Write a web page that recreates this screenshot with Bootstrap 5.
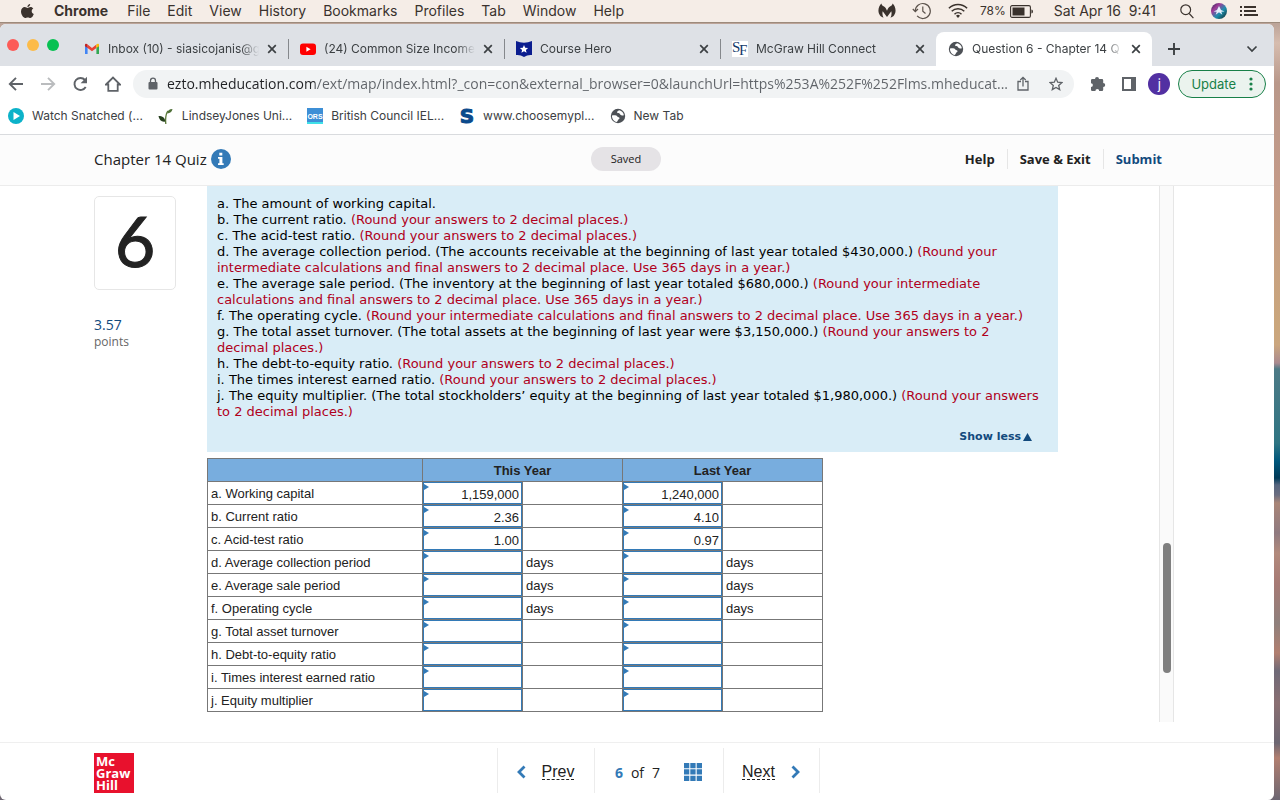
<!DOCTYPE html>
<html lang="en">
<head>
<meta charset="utf-8">
<meta name="viewport" content="width=device-width, initial-scale=1">
<title>Question 6 - Chapter 14 Quiz</title>
<link href="https://cdn.jsdelivr.net/npm/bootstrap@5.3.0/dist/css/bootstrap.min.css" rel="stylesheet">
<style>
  body { min-height: 100vh; color: #222; font-family: "Open Sans", "Liberation Sans", sans-serif; font-size: 14px; }
  button, a { color: inherit; }
  svg { display: block; flex: none; }
  .plain { border: 0; background: none; padding: 0; }
  /* system menu bar */
  .sysbar { height: 23px; background: #f5ede7; border-bottom: 1px solid #9d8b7c; font: 14px/22px Inter, sans-serif; color: #3a322d; padding: 0 22px 0 20px; }
  .sysbar .menus { gap: 17px; }
  .sysbar .app { padding: 0 2px; }
  .sysbar .menus a, .bm a, .tabx a { text-decoration: none; }
  .sysbar .charge { font-size: 12px; }
  .sysbar .clock { white-space: pre; }
  /* desktop behind the browser window */
  .desk { padding: 1px 6px 0 0; background: linear-gradient(#bba398 0, #d6bcae 20px, #b9988a 60px, #c49a88 160px, #caa67c 300px, #cba67e 322px, #a98a90 340px, #4d7a86 346px, #2f7583 420px, #00577c 438px, #003a58 455px, #56657f 462px, #6a6d80 472px, #a98577 480px, #8f7a80 510px, #b28a7c 530px, #a77a75 560px, #8f807c 600px, #b27f70 630px, #6f6a78 648px, #8a6f72 680px, #6c6672 720px, #b27f70 735px, #6c6672 100%); }
  .win { background: #fff; border-radius: 6px; overflow: hidden; }
  .strip { background: #dee1e6; height: 42px; padding: 8px 16px 0 7px; font: 12px/34px Inter, sans-serif; color: #3c4043; }
  .lights { width: 65px; gap: 8px; height: 26px; }
  .lights span { width: 12px; height: 12px; border-radius: 50%; }
  .tabx { flex: 0 1 216px; min-width: 0; height: 34px; padding: 0 11px 0 12px; gap: 8px; position: relative; }
  .tabx a { flex: 1; min-width: 0; overflow: hidden; white-space: nowrap; -webkit-mask-image: linear-gradient(90deg, #000 88%, transparent); mask-image: linear-gradient(90deg, #000 88%, transparent); }
  .tabx + .tabx:not(.on)::before { content: ""; position: absolute; left: 0; top: 7px; height: 20px; width: 1px; background: #85888c; }
  .tabx.on { background: #fff; border-radius: 8px 8px 0 0; }
  .tools { height: 36px; padding: 4px 8px 4px 7px; }
  .omni { background: #f1f3f4; border-radius: 14px; height: 28px; flex: 1; min-width: 0; margin-left: 12px; padding: 0 7px 0 14px; }
  .omni input { flex: 1; min-width: 0; border: 0; padding: 0; outline: 0; font: 14px/20px "Open Sans", sans-serif; color: transparent; background: linear-gradient(90deg, #202124 148px, #5f6368 148px); -webkit-background-clip: text; background-clip: text; }
  .me { width: 22px; height: 22px; margin-left: 12px; border-radius: 50%; background: #5230a2; color: #fff; font: 13px/22px Inter, sans-serif; }
  .upd { height: 28px; border: 1px solid #188048; border-radius: 14px; background: #ebf3ee; color: #188048; font: 13px/20px Inter, sans-serif; padding: 0 12px; gap: 13px; }
  .bm { height: 33px; padding: 0 8px 5px; gap: 15px; border-bottom: 1px solid #d9dbde; font: 12px/20px Inter, sans-serif; color: #3c4043; }
  .bm a { display: flex; align-items: center; gap: 8px; }
  /* quiz */
  .qhead { height: 51px; background: #fcfcfc; border-bottom: 1px solid #ececec; padding: 0 112px 2px 94px; display: grid; grid-template-columns: 1fr auto 1fr; align-items: center; }
  .qtitle { font-size: 15px; }
  .saved { background: #e5e3e6; border-radius: 12px; width: 70px; font-size: 11px; line-height: 24px; text-align: center; }
  .acts button { border: 0; background: none; font-weight: 700; font-size: 13px; line-height: 20px; padding: 0 12px; }
  .acts button + button { border-left: 1px solid #e6e6e6; }
  .acts button:last-child { padding-right: 0; }
  .blue { color: #124a7d; }
  .qmain { padding-left: 94px; }
  .qside { width: 113px; padding-top: 10px; }
  .qnum { width: 82px; height: 94px; border: 1px solid #e6e6e6; border-radius: 5px; font: 70px/86px Lato, sans-serif; -webkit-text-stroke: 1px #222; text-align: center; }
  .score { padding-top: 26px; line-height: 18px; }
  .points { font-size: 12px; line-height: 16px; color: #666; }
  .qbody { margin-right: 101px; }
  .prompt { background: #d9edf7; padding: 10px 17px 7px 10px; font: 13px/16px "DejaVu Sans", sans-serif; color: #000; }
  .prompt em { font-style: normal; color: #b00020; }
  .less { font: bold 11px/17px "DejaVu Sans", sans-serif; padding: 8px 9px 0 0; }
  .less button { gap: 2px; }
  .grid { width: 616px; margin-top: 6px; border-collapse: collapse; table-layout: fixed; font: 13px/20px "Liberation Sans", Arial, sans-serif; color: #222; }
  .grid th, .grid td { border: 1px solid #777; height: 23px; padding: 2px 3px 0; }
  .grid thead th { background: #78adde; text-align: center; }
  .grid tbody th { font-weight: 400; }
  .grid td.cell { padding: 0; position: relative; }
  .grid td.cell::before { content: ""; position: absolute; left: 1px; top: 2px; border: solid transparent; border-width: 3px 0 3px 5px; border-left-color: #337ab7; }
  .grid input { display: block; width: 100%; height: 22px; border: 1px solid #337ab7; border-radius: 0; padding: 2px 2px 0; text-align: right; color: #222; background: #fff; }
  .c-label { width: 215px; }
  .c-val { width: 100px; }
  .track { width: 15px; margin: 0 100px 20px 0; border: solid #e6e6e6; border-width: 0 1px; background: #fafafa; padding-top: 357px; }
  .thumb { width: 8px; height: 130px; margin-left: 3px; border-radius: 4px; background: #7f7f7f; }
  .qfoot { border-top: 1px solid #efefef; padding: 5px 52px 7px 94px; display: grid; grid-template-columns: 1fr auto 1fr; align-items: center; }
  .mh { width: 40px; height: 40px; margin-top: 5px; background: #e8112d; color: #fff; font: bold 13px/12px "Open Sans", sans-serif; padding: 2px; }
  .pager > * { border-left: 1px solid #ececec; height: 45px; padding-top: 3px; }
  .pager > :last-child { border-right: 1px solid #ececec; }
  .step { font: 16px/20px "Liberation Sans", sans-serif; width: 97px; }
  .step span { border-bottom: 1px dashed #222; line-height: 15px; }
  .count { width: 129px; }
  .count strong { color: #337ab7; }
</style>
</head>
<body class="d-flex flex-column">
<svg width="0" height="0" class="position-absolute" aria-hidden="true">
  <symbol id="x" viewBox="0 0 10 10"><path d="M1.2 1.2l7.600 7.600M8.800 1.200l-7.600 7.600" stroke="#3c4043" stroke-width="1.700"/></symbol>
  <symbol id="globe" viewBox="0 0 16 16"><circle cx="8" cy="8" r="7.200" fill="#4d5156"/><path d="M2 7.500c2.500-.3 4.500-.2 5.300.9.700 1 2.200.4 2.200 1.800 0 1.200-1.600.9-1.900 2.700l-.8 1.100C3.800 13.500 1.800 10.600 2 7.500zM9.300 2.200c-1.500.7-2.900 1.600-2 2.600.8.9 2.300.1 2.700 1.300.3 1.200 1.500 1.600 3.900 1.100-.3-2.500-2.100-4.400-4.600-5z" fill="#fff"/></symbol>
</svg>

<nav class="sysbar d-flex align-items-center justify-content-between" aria-label="System">
  <div class="menus d-flex align-items-center">
    <svg width="15" height="17" viewBox="0 0 15 17"><path d="M10.200 1c.1 1.500-1.300 3-2.800 3C7.200 2.500 8.700 1.100 10.200 1zM7.600 4.900c.6 0 1.500-.9 2.900-.9 1.200 0 2.200.6 2.800 1.500-2.300 1.400-2 4.500.5 5.500-.6 1.700-1.900 4-3.400 4-1 0-1.300-.6-2.600-.6s-1.700.6-2.600.6C3.200 15 1 11.500 1 8.600 1 5.700 2.900 4.100 4.700 4.100c1.300 0 2.200.8 2.900.8z" fill="#3a322d"/></svg>
    <a href="#" class="app fw-bold">Chrome</a><a href="#">File</a><a href="#">Edit</a><a href="#">View</a><a href="#">History</a><a href="#">Bookmarks</a><a href="#">Profiles</a><a href="#">Tab</a><a href="#">Window</a><a href="#">Help</a>
  </div>
  <div class="d-flex align-items-center">
    <svg width="18" height="16" viewBox="0 0 18 16"><path d="M3.500.5c.2 1.800 1.300 2.500 2.500 3C7.500 4.300 8.300 6 9 7.800c.7-1.800 1.500-3.500 3-4.300 1.200-.5 2.300-1.200 2.500-3 2.800 2.300 4.400 8 1.600 11.800-1 1.400-2.300 2.100-3.600 2.400 1-1.800 1.400-4 .8-6.500L9 14 4.700 8.200c-.6 2.500-.2 4.700.8 6.500-1.300-.3-2.600-1-3.600-2.400C-.9 8.500.7 2.800 3.500.5z" fill="#3a322d"/></svg>
    <svg class="ms-3" width="20" height="18" viewBox="0 0 20 18" fill="none" stroke="#5c534c" stroke-width="1.200"><path d="M3.300 9a7.500 7.500 0 1 1 1.800 4.900M.8 7l2.500 2.600L6 7M10.800 4.500V9.200l2.700 2.300"/></svg>
    <svg class="ms-3" width="20" height="16" viewBox="0 0 20 16" fill="none" stroke="#3a322d" stroke-width="1.500"><path d="M.9 5.200a13 13 0 0 1 18.200 0M3.700 8.200a9 9 0 0 1 12.600 0M6.500 11.200a5 5 0 0 1 7 0"/><path d="M8 12.800a2.800 2.800 0 0 1 4 0l-2 2.200z" fill="#3a322d" stroke="none"/></svg>
    <span class="charge ms-2 ps-1">78%</span>
    <svg class="ms-1" width="24" height="13" viewBox="0 0 24 13"><rect x=".6" y=".6" width="19.800" height="11.800" rx="1.500" fill="none" stroke="#3a322d" stroke-width="1.100"/><path d="M2.500 2.500h12v8h-12zM21.400 4.500q1.600 0 1.600 2t-1.600 2z" fill="#3a322d"/></svg>
    <span class="clock ms-3 ps-1">Sat Apr 16  9:41</span>
    <svg class="ms-4" width="14" height="15" viewBox="0 0 14 15" fill="none" stroke="#3a322d" stroke-width="1.200"><circle cx="5.700" cy="5.700" r="4.900"/><path d="M9.200 9.500l4.200 4.700"/></svg>
    <svg class="ms-3" width="18" height="18" viewBox="0 0 18 18"><defs><linearGradient id="sr" x1="0" y1="0" x2="1" y2="1"><stop offset="0" stop-color="#1c2450"/><stop offset=".3" stop-color="#a23a98"/><stop offset=".6" stop-color="#1b8fae"/><stop offset="1" stop-color="#122"/></linearGradient></defs><circle cx="9" cy="9" r="8" fill="url(#sr)"/><path d="M9 4l2 4 3.500 1.500-3.200.3 1 3L9 10.300 5.700 12.800l1-3-3.200-.3L7 8z" fill="#e8eefc"/></svg>
    <svg class="ms-2 ps-1" width="22" height="12" viewBox="0 0 18 12" fill="#3a322d"><path d="M0 1h2v2H0zM4 1h12v2H4zM0 5h2v2H0zM4 5h12v2H4zM0 9h2v2H0zM4 9h14v2H4z"/></svg>
  </div>
</nav>

<div class="desk flex-grow-1 d-flex flex-column">
<div class="win flex-grow-1 d-flex flex-column">
  <div class="strip d-flex">
    <div class="lights d-flex align-items-center"><span style="background:#fc5b57"></span><span style="background:#fcbb49"></span><span style="background:#07c152"></span></div>
    <div class="tabx d-flex align-items-center">
      <svg width="16" height="16" viewBox="0 0 16 16"><path d="M1 3v10h2.600V6.500z" fill="#4285f4"/><path d="M15 3v10h-2.600V6.500z" fill="#34a853"/><path d="M3.600 3.500L8 7l4.400-3.500v3.400L8 10.300 3.600 6.900z" fill="#ea4335"/><path d="M1 4.300C1 2.500 2.600 2.500 3.600 3.500v3.400L1 5.200z" fill="#c5221f"/><path d="M15 4.300c0-1.800-1.600-1.800-2.600-.8v3.400L15 5.200z" fill="#fbbc04"/></svg>
      <a href="#">Inbox (10) - siasicojanis@g</a><button class="plain" aria-label="Close tab"><svg width="10" height="10"><use href="#x"/></svg></button></div>
    <div class="tabx d-flex align-items-center">
      <svg width="16" height="16" viewBox="0 0 16 16"><rect y="2.500" width="16" height="11.500" rx="3" fill="#f00"/><path d="M6.400 5.700v5l4.200-2.500z" fill="#fff"/></svg>
      <a href="#">(24) Common Size Income</a><button class="plain" aria-label="Close tab"><svg width="10" height="10"><use href="#x"/></svg></button></div>
    <div class="tabx d-flex align-items-center">
      <svg width="16" height="16" viewBox="0 0 16 16"><path d="M0 0q8 3.500 16 0v14q-4.500-.5-8 2-3.500-2.500-8-2z" fill="#0b1d8f"/><path d="M8 4l1.200 2.700 2.900.3-2.200 1.900.7 2.900L8 10.300l-2.600 1.500.7-2.900L3.900 7l2.900-.3z" fill="#fff"/></svg>
      <a href="#">Course Hero</a><button class="plain" aria-label="Close tab"><svg width="10" height="10"><use href="#x"/></svg></button></div>
    <div class="tabx d-flex align-items-center">
      <svg width="16" height="16" viewBox="0 0 16 16"><path d="M0 0h16v16H0z" fill="#fff"/><text x="0" y="11" font-family="Liberation Serif, serif" font-size="15" fill="#123a6b">S</text><text x="7" y="14" font-family="Liberation Serif, serif" font-size="15" fill="#123a6b">F</text></svg>
      <a href="#">McGraw Hill Connect</a><button class="plain" aria-label="Close tab"><svg width="10" height="10"><use href="#x"/></svg></button></div>
    <div class="tabx on d-flex align-items-center">
      <svg width="16" height="16"><use href="#globe"/></svg>
      <a href="#">Question 6 - Chapter 14 Q</a><button class="plain" aria-label="Close tab"><svg width="10" height="10"><use href="#x"/></svg></button></div>
    <button class="plain ms-3" aria-label="New tab"><svg width="12" height="12" viewBox="0 0 12 12"><path d="M6 0v12M0 6h12" stroke="#3c4043" stroke-width="1.900"/></svg></button>
    <button class="plain ms-auto" aria-label="Search tabs"><svg width="12" height="8" viewBox="0 0 12 8"><path d="M1.500 1.500L6 6l4.500-4.500" fill="none" stroke="#3c4043" stroke-width="1.700"/></svg></button>
  </div>

  <div class="tools d-flex align-items-center">
    <button class="plain" aria-label="Back"><svg width="18" height="16" viewBox="0 0 18 16" fill="none" stroke="#5f6368" stroke-width="1.900"><path d="M16 8H3M9 1.800L2.800 8 9 14.200"/></svg></button>
    <button class="plain ms-3" aria-label="Forward"><svg width="16" height="16" viewBox="0 0 16 16" fill="none" stroke="#babcbe" stroke-width="1.900"><path d="M0 8h13M7 1.800L13.200 8 7 14.200"/></svg></button>
    <button class="plain ms-3" aria-label="Reload"><svg width="16" height="16" viewBox="0 0 16 16"><path d="M12.700 11A6 6 0 1 1 12 4" fill="none" stroke="#5f6368" stroke-width="1.900"/><path d="M14 .8v6.400H7.600z" fill="#5f6368"/></svg></button>
    <button class="plain ms-3" aria-label="Home"><svg width="16" height="16" viewBox="0 0 16 16" fill="none" stroke="#5f6368" stroke-width="1.800"><path d="M1 8.500L8 1.500l7 7h-2.300v6.300H3.300V8.500z"/></svg></button>
    <div class="omni d-flex align-items-center">
      <svg class="me-2" width="12" height="14" viewBox="0 0 12 14"><rect x="1.500" y="5" width="9" height="7.500" rx="1" fill="#5f6368"/><path d="M3.500 5.500V3.700a2.500 2.500 0 0 1 5 0v1.800" fill="none" stroke="#5f6368" stroke-width="1.300"/></svg>
      <input type="text" aria-label="Address" value="ezto.mheducation.com/ext/map/index.html?_con=con&amp;external_browser=0&amp;launchUrl=https%253A%252F%252Flms.mheducat...">
      <button class="plain ms-2" aria-label="Share"><svg width="12" height="16" viewBox="0 0 12 16" fill="none" stroke="#5f6368" stroke-width="1.300"><path d="M4 5.500H1v8.500h10V5.500H8M6 10.500V1.500M3.300 4L6 1.300 8.700 4"/></svg></button>
      <button class="plain ms-3 px-1" aria-label="Bookmark"><svg width="14" height="14" viewBox="0 0 14 14"><path d="M7 1.300l1.700 3.900 4.200.4-3.200 2.800 1 4.200L7 10.400l-3.700 2.200 1-4.200L1.100 5.600l4.200-.4z" fill="none" stroke="#5f6368" stroke-width="1.300"/></svg></button>
    </div>
    <button class="plain ms-3" aria-label="Extensions"><svg width="16" height="16" viewBox="0 0 16 16"><path d="M1 4.200Q1 3 2.200 3H5a2 2 0 0 1 4 0h3q1.200 0 1.200 1.200V7a2 2 0 0 1 0 4v2.800Q13.200 15 12 15H9.200a1.900 1.900 0 0 0-3.800 0H2.200Q1 15 1 13.800V11a1.900 1.900 0 0 0 0-3.800z" fill="#5f6368"/></svg></button>
    <button class="plain ms-3" aria-label="Side panel"><svg width="14" height="14" viewBox="0 0 14 14"><path d="M1 1h12v12H1z" fill="none" stroke="#5f6368" stroke-width="2"/><path d="M9 1h4v12H9z" fill="#5f6368"/></svg></button>
    <button class="plain me" aria-label="Profile">j</button>
    <button class="upd d-flex align-items-center ms-2">Update <svg width="4" height="14" viewBox="0 0 4 14" fill="#188048"><circle cx="2" cy="2" r="1.600"/><circle cx="2" cy="7" r="1.600"/><circle cx="2" cy="12" r="1.600"/></svg></button>
  </div>

  <nav class="bm d-flex align-items-center" aria-label="Bookmarks">
    <a href="#"><svg width="16" height="16" viewBox="0 0 16 16"><circle cx="8" cy="8" r="8" fill="#0cb2c9"/><path d="M5.500 4v8l6.500-4z" fill="#fff"/></svg>Watch Snatched (...</a>
    <a href="#"><svg width="16" height="16" viewBox="0 0 16 16"><path d="M7.800 16C7.300 11 7.600 6 10 3" fill="none" stroke="#5b7a3a" stroke-width="1.300"/><path d="M9.300 5.500C9.500 2.500 11 1.200 14.500 1c-.6 2.900-2.400 4.300-5.200 4.500z" fill="#4f7038"/><path d="M7.200 13.500C4 14.500 1.200 12 .5 8 4.500 8 7 9.500 7.200 13.500z" fill="#27401f"/></svg>LindseyJones Uni...</a>
    <a href="#"><svg width="16" height="16" viewBox="0 0 16 16"><path d="M0 0h16v16H0z" fill="#3d8fd6"/><path d="M0 14h16v2H0z" fill="#3fe0e8"/><text x="8" y="11" text-anchor="middle" font-family="Liberation Sans, sans-serif" font-size="7" font-weight="bold" fill="#fff">ORS</text></svg>British Council IEL...</a>
    <a href="#"><svg width="16" height="16" viewBox="0 0 16 16"><text x="8" y="15" text-anchor="middle" font-family="DejaVu Sans, sans-serif" font-weight="bold" font-size="20" fill="#0b4a8c" stroke="#0b4a8c">S</text></svg>www.choosemypl...</a>
    <a href="#"><svg width="16" height="16"><use href="#globe"/></svg>New Tab</a>
  </nav>

  <header class="qhead">
    <div class="d-flex align-items-center gap-1"><span class="qtitle">Chapter 14 Quiz</span>
      <button class="plain" aria-label="Quiz information"><svg width="20" height="20" viewBox="0 0 20 20"><circle cx="10" cy="10" r="10" fill="#337ab7"/><path d="M8.300 3.800h3v2.700h-3zM7 8h4.400v6.200h1.300V16H7v-1.800h1.400V9.800H7z" fill="#fff"/></svg></button></div>
    <div class="saved me-1" role="status">Saved</div>
    <div class="acts d-flex justify-content-end"><button>Help</button><button>Save &amp; Exit</button><button class="blue">Submit</button></div>
  </header>

  <main class="qmain flex-grow-1 d-flex">
    <aside class="qside flex-shrink-0">
      <div class="qnum">6</div>
      <div class="score blue">3.57</div>
      <div class="points">points</div>
    </aside>
    <div class="qbody flex-grow-1">
      <section class="prompt">
        <div>a. The amount of working capital.</div>
        <div>b. The current ratio. <em>(Round your answers to 2 decimal places.)</em></div>
        <div>c. The acid-test ratio. <em>(Round your answers to 2 decimal places.)</em></div>
        <div>d. The average collection period. (The accounts receivable at the beginning of last year totaled $430,000.) <em>(Round your intermediate calculations and final answers to 2 decimal place. Use 365 days in a year.)</em></div>
        <div>e. The average sale period. (The inventory at the beginning of last year totaled $680,000.) <em>(Round your intermediate calculations and final answers to 2 decimal place. Use 365 days in a year.)</em></div>
        <div>f. The operating cycle. <em>(Round your intermediate calculations and final answers to 2 decimal place. Use 365 days in a year.)</em></div>
        <div>g. The total asset turnover. (The total assets at the beginning of last year were $3,150,000.) <em>(Round your answers to 2 decimal places.)</em></div>
        <div>h. The debt-to-equity ratio. <em>(Round your answers to 2 decimal places.)</em></div>
        <div>i. The times interest earned ratio. <em>(Round your answers to 2 decimal places.)</em></div>
        <div>j. The equity multiplier. (The total stockholders’ equity at the beginning of last year totaled $1,980,000.) <em>(Round your answers to 2 decimal places.)</em></div>
        <div class="d-flex justify-content-end less"><button class="plain blue fw-bold d-flex align-items-center">Show less<svg width="9" height="8" viewBox="0 0 9 8"><path d="M4.500 0L9 8H0z" fill="#124a7d"/></svg></button></div>
      </section>
      <table class="grid">
        <colgroup><col class="c-label"><col class="c-val"><col class="c-val"><col class="c-val"><col class="c-val"></colgroup>
        <thead><tr><th></th><th colspan="2" scope="col">This Year</th><th colspan="2" scope="col">Last Year</th></tr></thead>
        <tbody>
          <tr><th scope="row">a. Working capital</th><td class="cell"><input aria-label="Working capital, this year" value="1,159,000"></td><td></td><td class="cell"><input aria-label="Working capital, last year" value="1,240,000"></td><td></td></tr>
          <tr><th scope="row">b. Current ratio</th><td class="cell"><input aria-label="Current ratio, this year" value="2.36"></td><td></td><td class="cell"><input aria-label="Current ratio, last year" value="4.10"></td><td></td></tr>
          <tr><th scope="row">c. Acid-test ratio</th><td class="cell"><input aria-label="Acid-test ratio, this year" value="1.00"></td><td></td><td class="cell"><input aria-label="Acid-test ratio, last year" value="0.97"></td><td></td></tr>
          <tr><th scope="row">d. Average collection period</th><td class="cell"><input aria-label="Average collection period, this year"></td><td>days</td><td class="cell"><input aria-label="Average collection period, last year"></td><td>days</td></tr>
          <tr><th scope="row">e. Average sale period</th><td class="cell"><input aria-label="Average sale period, this year"></td><td>days</td><td class="cell"><input aria-label="Average sale period, last year"></td><td>days</td></tr>
          <tr><th scope="row">f. Operating cycle</th><td class="cell"><input aria-label="Operating cycle, this year"></td><td>days</td><td class="cell"><input aria-label="Operating cycle, last year"></td><td>days</td></tr>
          <tr><th scope="row">g. Total asset turnover</th><td class="cell"><input aria-label="Total asset turnover, this year"></td><td></td><td class="cell"><input aria-label="Total asset turnover, last year"></td><td></td></tr>
          <tr><th scope="row">h. Debt-to-equity ratio</th><td class="cell"><input aria-label="Debt-to-equity ratio, this year"></td><td></td><td class="cell"><input aria-label="Debt-to-equity ratio, last year"></td><td></td></tr>
          <tr><th scope="row">i. Times interest earned ratio</th><td class="cell"><input aria-label="Times interest earned ratio, this year"></td><td></td><td class="cell"><input aria-label="Times interest earned ratio, last year"></td><td></td></tr>
          <tr><th scope="row">j. Equity multiplier</th><td class="cell"><input aria-label="Equity multiplier, this year"></td><td></td><td class="cell"><input aria-label="Equity multiplier, last year"></td><td></td></tr>
        </tbody>
      </table>
    </div>
    <div class="track flex-shrink-0"><div class="thumb"></div></div>
  </main>

  <footer class="qfoot">
    <div class="mh">Mc<br>Graw<br>Hill</div>
    <div class="pager d-flex align-items-center">
      <div class="step d-flex align-items-center justify-content-center"><button class="plain d-flex align-items-center gap-3"><svg width="9" height="14" viewBox="0 0 9 14"><path d="M7.500 1.500L2 7l5.500 5.500" fill="none" stroke="#337ab7" stroke-width="2.800"/></svg><span>Prev</span></button></div>
      <div class="count d-flex align-items-center justify-content-center gap-2"><strong>6</strong><span>of</span><span>7</span><button class="plain ms-3" aria-label="Question list"><svg width="18" height="18" viewBox="0 0 18 18" fill="#337ab7"><path d="M0 0h5.300v5.300H0zM6.300 0h5.300v5.300H6.300zM12.700 0H18v5.300h-5.300zM0 6.300h5.300v5.300H0zM6.300 6.300h5.300v5.300H6.300zM12.700 6.300H18v5.300h-5.300zM0 12.700h5.300V18H0zM6.300 12.700h5.300V18H6.300zM12.700 12.700H18V18h-5.300z"/></svg></button></div>
      <div class="step d-flex align-items-center justify-content-center"><button class="plain d-flex align-items-center gap-3"><span>Next</span><svg width="9" height="14" viewBox="0 0 9 14"><path d="M1.500 1.500L7 7l-5.500 5.500" fill="none" stroke="#337ab7" stroke-width="2.800"/></svg></button></div>
    </div>
    <div></div>
  </footer>
</div>
</div>
<script src="https://cdn.jsdelivr.net/npm/bootstrap@5.3.0/dist/js/bootstrap.bundle.min.js"></script>
</body>
</html>
